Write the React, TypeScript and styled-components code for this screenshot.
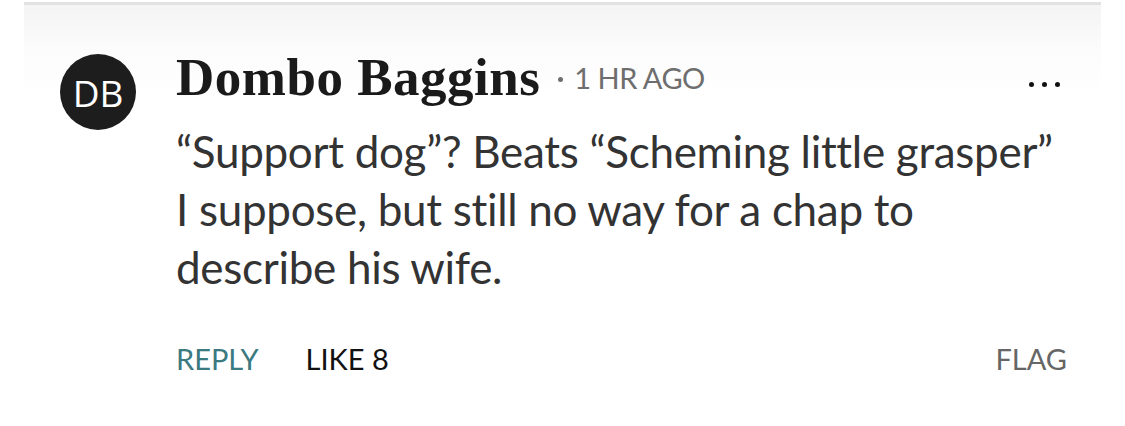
import React from "react";
import styled, { createGlobalStyle } from "styled-components";

const Global = createGlobalStyle`
  html, body { margin: 0; padding: 0; background: #ffffff; }
  body { width: 1125px; height: 426px; overflow: hidden; }
`;

const Page = styled.div`
  width: 1125px;
  height: 426px;
  padding: 2px 24px 0;
  box-sizing: border-box;
`;

const Card = styled.div`
  border-top: 3px solid #e2e2e2;
  background: linear-gradient(to bottom, #f4f4f4 0px, #fbfbfb 40px, #ffffff 90px);
  height: 100%;
  box-sizing: border-box;
  padding: 39px 34px 0 36px;
  display: flex;
  gap: 40px;
`;

const Avatar = styled.div`
  flex: none;
  margin-top: 10px;
  width: 76px;
  height: 76px;
  border-radius: 50%;
  background: #1d1d1d;
  color: #ffffff;
  display: flex;
  align-items: center;
  justify-content: center;
  font-family: "Open Sans", sans-serif;
  font-size: 37px;
`;

const Content = styled.div`
  flex: 1;
  padding-top: 3px;
  display: flex;
  flex-direction: column;
`;

const Header = styled.div`
  display: flex;
  align-items: flex-start;
  height: 60px;
`;

const Name = styled.span`
  font-family: "Liberation Serif", serif;
  font-weight: 700;
  font-size: 53px;
  letter-spacing: 0.5px;
  color: #1a1a1a;
`;

const Time = styled.span`
  margin: 13px 0 0 18px;
  font-family: "Lato", sans-serif;
  font-size: 29px;
  color: #6e6e6e;
  letter-spacing: -0.5px;
`;

const Dot = styled.span`
  display: inline-block;
  vertical-align: middle;
  width: 5px;
  height: 5px;
  border-radius: 50%;
  background: #6e6e6e;
  margin: -4px 11px 0 0;
`;

const Menu = styled.button`
  margin-left: auto;
  align-self: center;
  background: none;
  border: 0;
  padding: 0;
  display: flex;
  gap: 8px;
  margin-right: 7px;
  margin-top: 15px;
`;

const MenuDot = styled.span`
  width: 5px;
  height: 5px;
  border-radius: 50%;
  background: #111;
`;

const Body = styled.p`
  margin: 15px 0 0;
  font-family: "Lato", sans-serif;
  font-size: 44px;
  line-height: 58px;
  color: #333333;
  letter-spacing: -0.3px;
`;

const Actions = styled.div`
  display: flex;
  align-items: center;
  margin-top: 45px;
  font-family: "Lato", sans-serif;
  font-size: 29px;
  gap: 47px;
`;

const Action = styled.span<{ $tone: "teal" | "black" | "gray" }>`
  color: ${(p) => (p.$tone === "teal" ? "#3b7a80" : p.$tone === "black" ? "#111111" : "#666666")};
  ${(p) => (p.$tone === "gray" ? "margin-left: auto;" : "")}
`;

export default function App() {
  return (
    <>
      <Global />
      <Page>
        <Card>
          <Avatar>DB</Avatar>
          <Content>
            <Header>
              <Name>Dombo Baggins</Name>
              <Time>
                <Dot />1 HR AGO
              </Time>
              <Menu aria-label="More">
                <MenuDot />
                <MenuDot />
                <MenuDot />
              </Menu>
            </Header>
            <Body>
              “Support dog”? Beats “Scheming little grasper” I suppose, but still no way for a chap to
              describe his wife.
            </Body>
            <Actions>
              <Action $tone="teal">REPLY</Action>
              <Action $tone="black">LIKE 8</Action>
              <Action $tone="gray">FLAG</Action>
            </Actions>
          </Content>
        </Card>
      </Page>
    </>
  );
}
